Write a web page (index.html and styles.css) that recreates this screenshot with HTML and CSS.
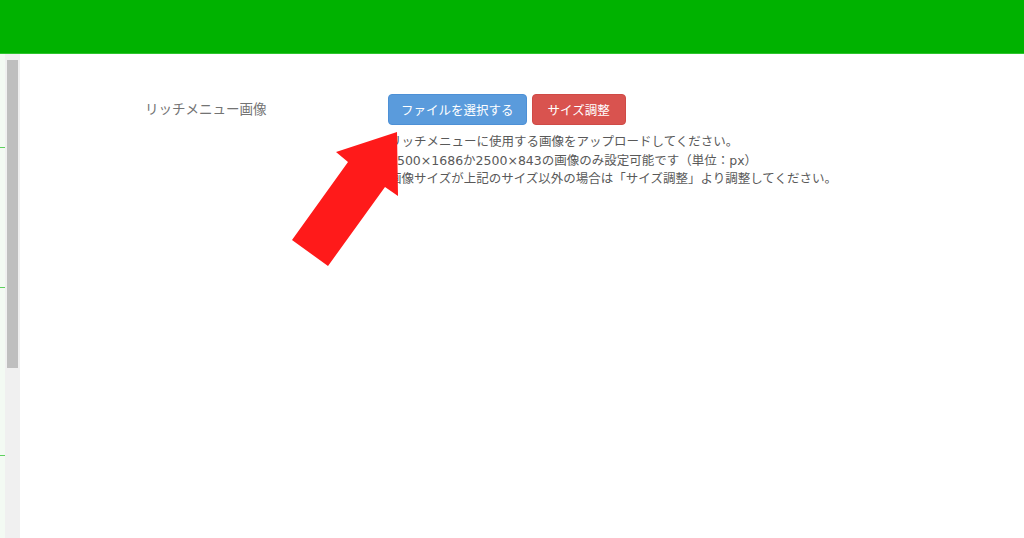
FILE: index.html
```html
<!DOCTYPE html>
<html lang="ja">
<head>
    <meta charset="UTF-8">
    <meta name="viewport" content="width=device-width, initial-scale=1.0">
    <title>リッチメニュー</title>
    <link rel="stylesheet" href="styles.css">
</head>
<body>
    <header class="topbar"></header>

    <div class="layout">
        <aside class="side">
            <div class="rail">
                <span class="tick tick-1"></span>
                <span class="tick tick-2"></span>
                <span class="tick tick-3"></span>
            </div>
            <div class="scroll">
                <div class="thumb"></div>
            </div>
        </aside>

        <main class="content">
            <div class="form-row">
                <div class="form-label">リッチメニュー画像</div>
                <div class="form-field">
                    <div class="buttons">
                        <button class="btn btn-blue">ファイルを選択する</button>
                        <button class="btn btn-red">サイズ調整</button>
                    </div>
                    <p class="help">
                        リッチメニューに使用する画像をアップロードしてください。<br>
                        2500×1686か2500×843の画像のみ設定可能です（単位：px）<br>
                        画像サイズが上記のサイズ以外の場合は「サイズ調整」より調整してください。
                    </p>
                </div>
            </div>
        </main>
    </div>

    <!-- arrow drawn over the page -->
    <svg class="arrow" width="1024" height="538" viewBox="0 0 1024 538">
        <polygon points="397,132 336,152 348,162 292,240 328,266 385,187 398,196" fill="#ff1a1a"/>
    </svg>
</body>
</html>
```

FILE: styles.css
```css
body {
    margin: 0;
    font-family: "DejaVu Sans", "Noto Sans CJK JP", sans-serif;
    background: #fff;
    height: 538px;
    overflow: hidden;
}
.topbar {
    height: 53px;
    background: #00b200;
    border-bottom: 1px solid #2ec42e;
}
.layout {
    display: flex;
    height: 484px;
}
.side {
    display: flex;
    width: 20px;
}
.rail {
    width: 5px;
    background: #f3faf3;
    display: flex;
    flex-direction: column;
}
.tick {
    display: block;
    height: 1px;
    width: 5px;
    background: #5fd05f;
}
.tick-1 { margin-top: 93px; }
.tick-2 { margin-top: 139px; }
.tick-3 { margin-top: 167px; }
.scroll {
    width: 15px;
    background: #f0f0f0;
    padding: 6px 2px 0 2px;
    box-sizing: border-box;
}
.thumb {
    height: 308px;
    background: #bfbfbf;
}
.content {
    flex: 1;
    padding: 40px 0 0 125px;
}
.form-row {
    display: grid;
    grid-template-columns: 243px 1fr;
}
.form-label {
    font-size: 13.5px;
    color: #737373;
    line-height: 31px;
}
.buttons {
    display: flex;
    gap: 5px;
}
.btn {
    height: 31px;
    padding: 0 12px;
    font-family: inherit;
    font-size: 12.5px;
    color: #fff;
    border-radius: 4px;
    cursor: pointer;
}
.btn-blue {
    background: #5a9bdc;
    border: 1px solid #4d90d6;
}
.btn-red {
    padding: 0 15px;
    background: #d9534f;
    border: 1px solid #cf4a46;
}
.help {
    margin: 8px 0 0 1px;
    font-size: 12.5px;
    line-height: 18.5px;
    color: #595959;
}
.arrow {
    position: absolute;
    left: 0;
    top: 0;
    pointer-events: none;
}
```
